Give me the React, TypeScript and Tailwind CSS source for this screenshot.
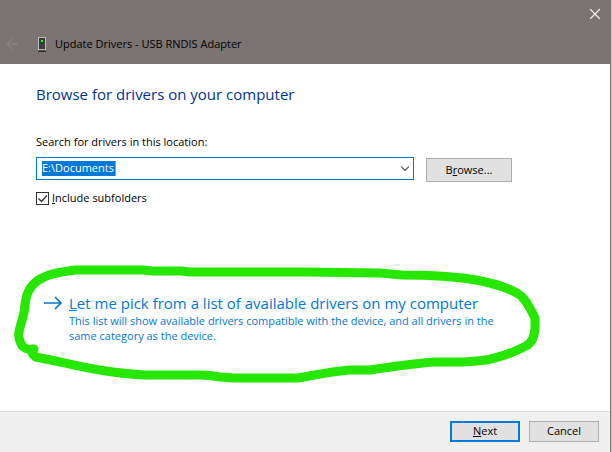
import type { ReactNode } from 'react';

function DeviceIcon() {
  return (
    <svg width="8" height="15" viewBox="0 0 8 15" shapeRendering="crispEdges" aria-hidden="true">
      <rect width="8" height="13" fill="#b9bcbc" />
      <rect x="1" y="1" width="6" height="11" fill="#3b3b3b" />
      <rect x="3" y="3" width="2" height="2" fill="#1fff2c" />
      <rect x="1" y="13" width="6" height="1" fill="#4a4646" />
      <rect y="14" width="8" height="1" fill="#303030" />
    </svg>
  );
}

function BackIcon() {
  return (
    <svg width="12" height="12" viewBox="0 0 12 12" fill="none" stroke="#858281" strokeWidth="1.5" aria-hidden="true">
      <path d="M12 6H1M6 1L1 6l5 5" />
    </svg>
  );
}

function CloseIcon() {
  return (
    <svg width="10" height="10" viewBox="0 0 10 10" fill="none" stroke="#ffffff" strokeWidth="1.2" aria-hidden="true">
      <path d="M0 0l10 10M10 0L0 10" />
    </svg>
  );
}

function ChevronIcon() {
  return (
    <svg width="8" height="5" viewBox="0 0 8 5" fill="none" stroke="#555555" strokeWidth="1.2" aria-hidden="true">
      <path d="M0 .5l4 4 4-4" />
    </svg>
  );
}

function ArrowIcon() {
  return (
    <svg className="shrink-0" width="18" height="14" viewBox="0 0 18 14" fill="none" stroke="#0078d7" strokeWidth="1.6" aria-hidden="true">
      <path d="M0 7h17M11 1l6 6-6 6" />
    </svg>
  );
}

function MarkerRing() {
  return (
    <svg
      className="pointer-events-none absolute -top-6 -left-6 h-[124px] w-[534px]"
      viewBox="12 262 534 124"
      fill="none"
      stroke="#27e600"
      strokeWidth="9"
      strokeLinecap="round"
      strokeLinejoin="round"
      aria-hidden="true"
    >
      <path d="M33 348C28 349 23 347 21 343C17 335 19 330 21 323C23 315 25 311 25 303C26 294 30 285 37 280C47 273 60 271 75 269H143L152 270H181L190 271L306 271L380 272L402 274C435 274 458 276 476 279C493 282 512 288 521 295C527 300 531 309 535 317V328C534 335 533 341 526 345C516 350 507 354 498 356C488 360 474 360 463 361H434C410 363 390 366 370 369H351C335 370 320 373 304 376L298 377H234L220 376C210 374 205 374 200 374H145C130 373 117 372 106 370C85 367 62 361 41 357C35 357 33 354 32 352L34 348" />
    </svg>
  );
}

function DialogButton({ children, className }: { children: ReactNode; className: string }) {
  return (
    <button type="button" className={`flex items-center justify-center bg-[#e1e1e1] ${className}`}>
      <span>{children}</span>
    </button>
  );
}

export default function App() {
  return (
    <div className="flex min-h-screen flex-col border-r border-[#c9c6c6] bg-white font-['Open_Sans','Noto_Sans',sans-serif] text-[11px] text-black">
      <header className="flex h-16 flex-col bg-[#7b7473]">
        <div className="flex h-7 items-center justify-end pr-[11px]">
          <button type="button" aria-label="Close">
            <CloseIcon />
          </button>
        </div>
        <div className="flex h-8 items-center pl-1.5">
          <button type="button" aria-label="Back" disabled className="mr-5">
            <BackIcon />
          </button>
          <DeviceIcon />
          <span className="ml-[9px] leading-4">Update Drivers - USB RNDIS Adapter</span>
        </div>
      </header>

      <div className="flex flex-1 flex-col border-r border-[#7b7473]">
        <main className="flex-1 px-9 pt-5">
          <h1 className="text-[15px] leading-5 text-[#003399]">Browse for drivers on your computer</h1>

          <label htmlFor="location" className="mt-[30px] block leading-4">
            Search for drivers in this location:
          </label>
          <div className="mt-[7px] flex items-start gap-3">
            <div className="flex h-[23px] max-w-[378px] flex-1 items-center justify-between border border-[#0078d7] pr-1 pl-[5px]">
              <input
                id="location"
                type="text"
                defaultValue="E:\Documents"
                className="h-[15px] w-[74px] border-r border-[#ff8728] bg-[#0078d7] text-white outline-none"
              />
              <button type="button" aria-label="Show locations">
                <ChevronIcon />
              </button>
            </div>
            <DialogButton className="mt-px h-6 w-[86px] border border-[#adadad]">
              B<u>r</u>owse...
            </DialogButton>
          </div>

          <label className="mt-2 flex h-4 items-center gap-[3px] leading-4">
            <span className="grid">
              <input
                type="checkbox"
                defaultChecked
                className="peer col-start-1 row-start-1 size-[13px] appearance-none border border-[#333333] bg-white"
              />
              <svg
                className="pointer-events-none invisible col-start-1 row-start-1 peer-checked:visible"
                width="13"
                height="13"
                viewBox="0 0 13 13"
                fill="none"
                stroke="#333333"
                strokeWidth="1.3"
                aria-hidden="true"
              >
                <path d="M2.5 6.5l3 3 5.500-6" />
              </svg>
            </span>
            <span>
              <u>I</u>nclude subfolders
            </span>
          </label>

          <div className="relative mt-[81px]">
            <a href="#pick" className="flex items-start gap-[7px] pt-1.5 pl-2 text-[#0078d7]">
              <span className="flex h-5 items-center">
                <ArrowIcon />
              </span>
              <span className="max-w-[444px]">
                <span className="block text-[15px] leading-5">
                  <u>L</u>et me pick from a list of available drivers on my computer
                </span>
                <span className="block leading-[15px]">
                  This list will show available drivers compatible with the device, and all drivers in the same
                  category as the device.
                </span>
              </span>
            </a>
            <MarkerRing />
          </div>
        </main>

        <footer className="flex h-[41px] items-start justify-end gap-[9px] border-t border-[#dfdfdf] bg-[#f0f0f0] pt-[9px] pr-[11px]">
          <DialogButton className="h-[21px] w-[70px] border-2 border-[#0078d7]">
            <u>N</u>ext
          </DialogButton>
          <DialogButton className="h-[21px] w-[70px] border border-[#adadad]">Cancel</DialogButton>
        </footer>
      </div>
    </div>
  );
}
